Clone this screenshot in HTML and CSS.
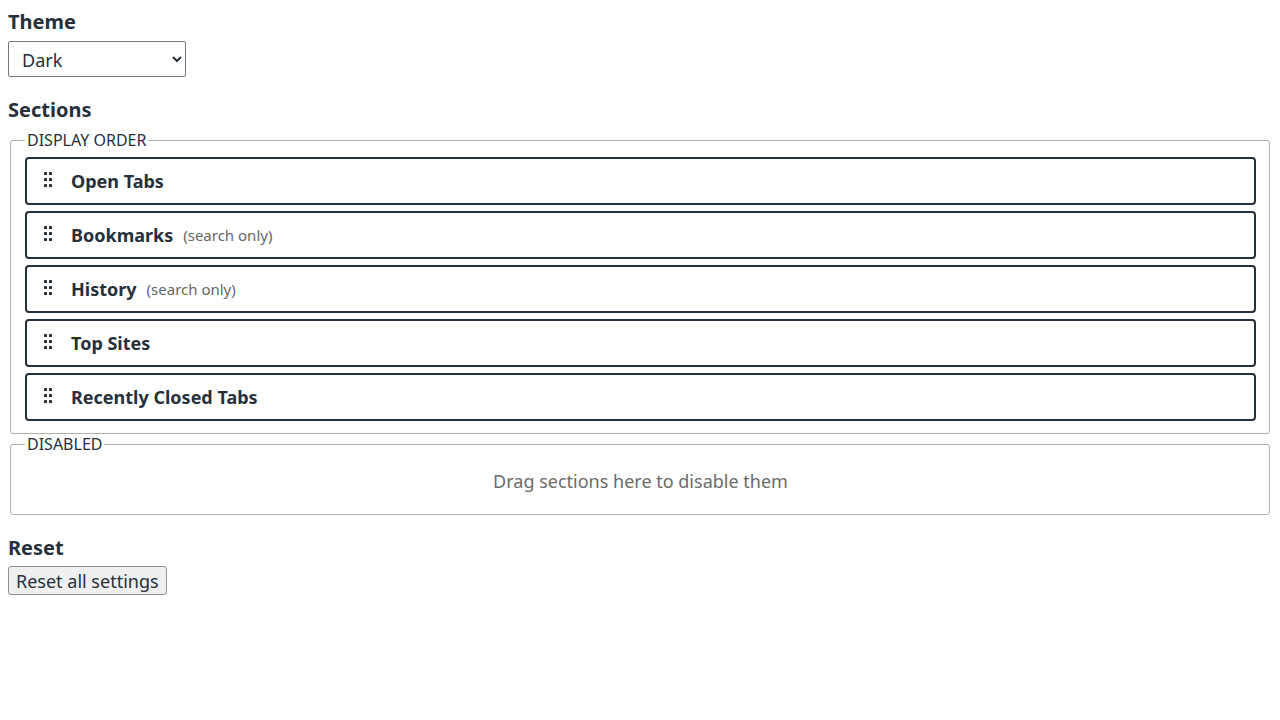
FILE: index.html
```html
<!DOCTYPE html>
<html>
<head>
<meta charset="utf-8">
<link rel="stylesheet" href="styles.css">
</head>
<body>
<h2 class="heading theme-heading">Theme</h2>
<select class="theme-select">
  <option>Dark</option>
  <option>Light</option>
  <option>System</option>
</select>

<h2 class="heading sections-heading">Sections</h2>
<fieldset class="group">
  <legend class="group-legend">DISPLAY ORDER</legend>
  <div class="item-list">
    <div class="item">
      <svg class="handle" width="8" height="16" viewBox="0 0 8 16"><rect x="0" y="0" width="3" height="3" rx="0.6"/><rect x="5" y="0" width="3" height="3" rx="0.6"/><rect x="0" y="6" width="3" height="3" rx="0.6"/><rect x="5" y="6" width="3" height="3" rx="0.6"/><rect x="0" y="12" width="3" height="3" rx="0.6"/><rect x="5" y="12" width="3" height="3" rx="0.6"/></svg>
      <span class="item-title">Open Tabs</span>
    </div>
    <div class="item">
      <svg class="handle" width="8" height="16" viewBox="0 0 8 16"><rect x="0" y="0" width="3" height="3" rx="0.6"/><rect x="5" y="0" width="3" height="3" rx="0.6"/><rect x="0" y="6" width="3" height="3" rx="0.6"/><rect x="5" y="6" width="3" height="3" rx="0.6"/><rect x="0" y="12" width="3" height="3" rx="0.6"/><rect x="5" y="12" width="3" height="3" rx="0.6"/></svg>
      <span class="item-title">Bookmarks</span>
      <span class="item-note">(search only)</span>
    </div>
    <div class="item">
      <svg class="handle" width="8" height="16" viewBox="0 0 8 16"><rect x="0" y="0" width="3" height="3" rx="0.6"/><rect x="5" y="0" width="3" height="3" rx="0.6"/><rect x="0" y="6" width="3" height="3" rx="0.6"/><rect x="5" y="6" width="3" height="3" rx="0.6"/><rect x="0" y="12" width="3" height="3" rx="0.6"/><rect x="5" y="12" width="3" height="3" rx="0.6"/></svg>
      <span class="item-title">History</span>
      <span class="item-note">(search only)</span>
    </div>
    <div class="item">
      <svg class="handle" width="8" height="16" viewBox="0 0 8 16"><rect x="0" y="0" width="3" height="3" rx="0.6"/><rect x="5" y="0" width="3" height="3" rx="0.6"/><rect x="0" y="6" width="3" height="3" rx="0.6"/><rect x="5" y="6" width="3" height="3" rx="0.6"/><rect x="0" y="12" width="3" height="3" rx="0.6"/><rect x="5" y="12" width="3" height="3" rx="0.6"/></svg>
      <span class="item-title">Top Sites</span>
    </div>
    <div class="item">
      <svg class="handle" width="8" height="16" viewBox="0 0 8 16"><rect x="0" y="0" width="3" height="3" rx="0.6"/><rect x="5" y="0" width="3" height="3" rx="0.6"/><rect x="0" y="6" width="3" height="3" rx="0.6"/><rect x="5" y="6" width="3" height="3" rx="0.6"/><rect x="0" y="12" width="3" height="3" rx="0.6"/><rect x="5" y="12" width="3" height="3" rx="0.6"/></svg>
      <span class="item-title">Recently Closed Tabs</span>
    </div>
  </div>
</fieldset>

<fieldset class="group disabled-group">
  <legend class="group-legend">DISABLED</legend>
  <div class="empty-note">Drag sections here to disable them</div>
</fieldset>

<h2 class="heading reset-heading">Reset</h2>
<button class="reset-btn">Reset all settings</button>
</body>
</html>
```
FILE: styles.css
```css
body {
  margin: 8px;
  font-family: "Noto Sans", "Open Sans", sans-serif;
  color: #26303b;
  background: #fff;
}
.heading {
  font-size: 20px;
  font-weight: 700;
  line-height: 28px;
  margin: 0 0 5px 0;
}
.theme-heading { margin-top: 0; }
.theme-select {
  width: 178px;
  height: 36px;
  font-family: inherit;
  font-size: 18px;
  color: #26303b;
  padding: 1px 9px 0 9px;
  border: 1px solid #767676;
  border-radius: 2px;
  background: #fff;
}
.sections-heading { margin-top: 19px; margin-bottom: 10px; }
.group {
  margin: 0 2px;
  padding: 0 13px 12px 14px;
  border: 1px solid #b0b0b0;
  border-radius: 3px;
}
.group-legend {
  font-size: 16px;
  line-height: 12px;
  padding: 0 2px 0 2px;
  color: #26303b;
}
.item-list {
  display: flex;
  flex-direction: column;
  gap: 6px;
  padding-top: 11px;
}
.item {
  display: flex;
  align-items: center;
  height: 48px;
  box-sizing: border-box;
  border: 2px solid #26303b;
  border-radius: 4px;
  padding-left: 17px;
}
.handle {
  fill: #26303b;
  margin: 0 19px 2px 0;
  flex: none;
}
.item-title {
  font-size: 18px;
  font-weight: 700;
}
.item-note {
  font-size: 15px;
  color: #666;
  margin-left: 10px;
}
.disabled-group {
  margin-top: 4px;
  padding-bottom: 0;
}
.empty-note {
  text-align: center;
  font-size: 18px;
  color: #6b6b6b;
  height: 64px;
  line-height: 62px;
}
.reset-heading { margin-top: 19px; margin-bottom: 4px; }
.reset-btn {
  font-family: inherit;
  font-size: 18px;
  color: #26303b;
  height: 29px;
  padding: 0 7px;
  border: 1px solid #8f8f8f;
  border-radius: 3px;
  background: #efefef;
}
```
